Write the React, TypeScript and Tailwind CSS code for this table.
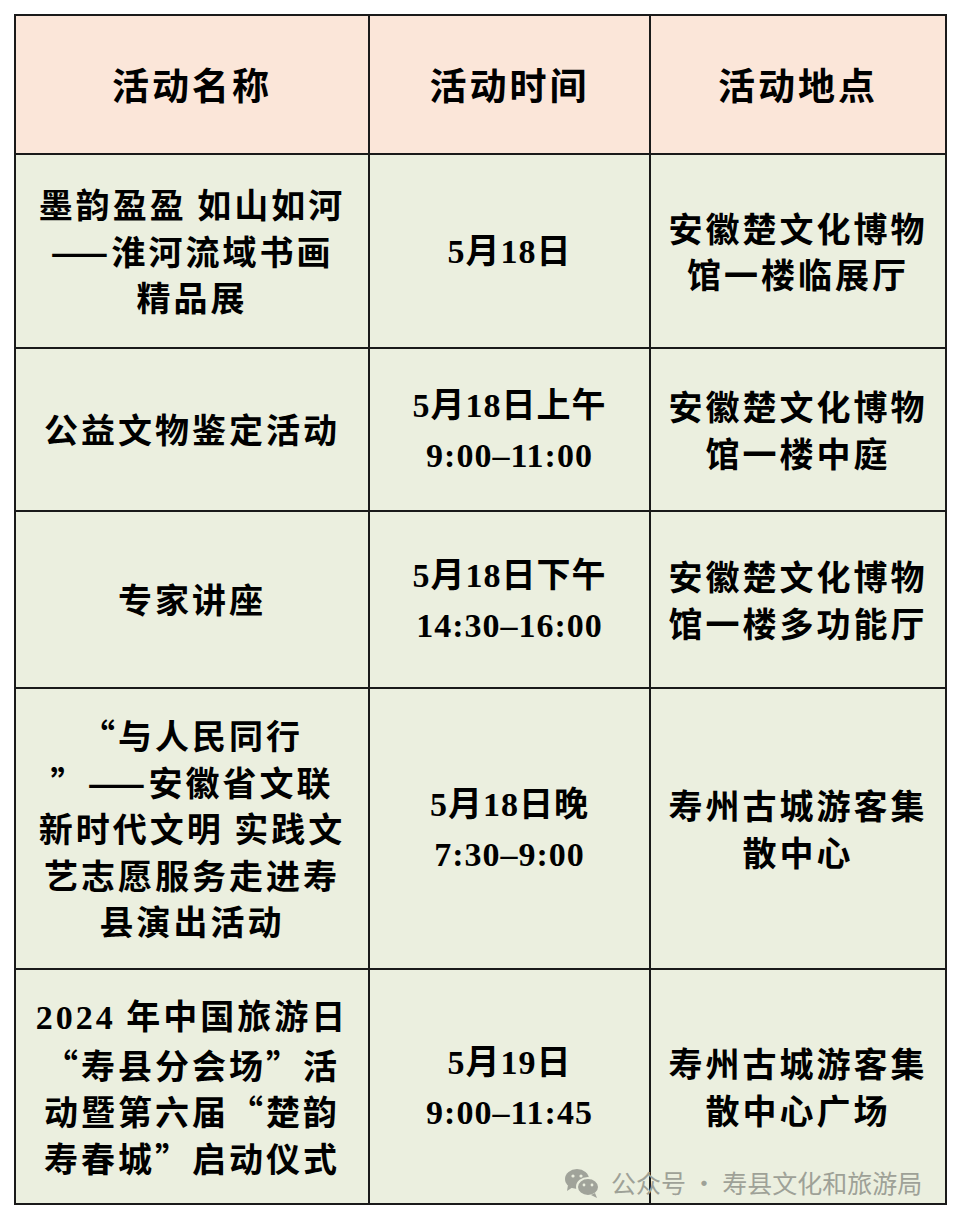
import React from 'react'

const cjk = '[font-family:"Noto_Sans_CJK_SC",sans-serif]'

// digits in the body are set in a Times-like serif
const Num = ({ children }: { children: React.ReactNode }) => (
  <span className='[font-family:"Liberation_Serif",serif]'>{children}</span>
)

const Lines = ({ lines }: { lines: React.ReactNode[] }) => (
  <>
    {lines.map((l, i) => (
      <div key={i} className="whitespace-nowrap">{l}</div>
    ))}
  </>
)

const rows: { h: string; name: React.ReactNode[]; time: React.ReactNode[]; place: React.ReactNode[] }[] = [
  {
    h: 'h-[194px]',
    name: ['墨韵盈盈 如山如河', '——淮河流域书画', '精品展'],
    time: [<><Num>5</Num>月<Num>18</Num>日</>],
    place: ['安徽楚文化博物', '馆一楼临展厅'],
  },
  {
    h: 'h-[163px]',
    name: ['公益文物鉴定活动'],
    time: [<><Num>5</Num>月<Num>18</Num>日上午</>, <Num>9:00–11:00</Num>],
    place: ['安徽楚文化博物', '馆一楼中庭'],
  },
  {
    h: 'h-[177px]',
    name: ['专家讲座'],
    time: [<><Num>5</Num>月<Num>18</Num>日下午</>, <Num>14:30–16:00</Num>],
    place: ['安徽楚文化博物', '馆一楼多功能厅'],
  },
  {
    h: 'h-[281px]',
    name: ['“与人民同行', '”——安徽省文联', '新时代文明 实践文', '艺志愿服务走进寿', '县演出活动'],
    time: [<><Num>5</Num>月<Num>18</Num>日晚</>, <Num>7:30–9:00</Num>],
    place: ['寿州古城游客集', '散中心'],
  },
  {
    h: 'h-[235px]',
    name: [<><Num>2024</Num> 年中国旅游日</>, '“寿县分会场”活', '动暨第六届“楚韵', '寿春城”启动仪式'],
    time: [<><Num>5</Num>月<Num>19</Num>日</>, <Num>9:00–11:45</Num>],
    place: ['寿州古城游客集', '散中心广场'],
  },
]

const WeChatIcon = () => (
  <svg width="36" height="30" viewBox="0 0 36 30" fill="#a0a39a">
    <ellipse cx="13" cy="11" rx="12" ry="10" />
    <path d="M4 17 L3 23 L9 19 Z" />
    <ellipse cx="24" cy="19" rx="11" ry="9" stroke="#ebefdf" strokeWidth="2" />
    <path d="M31 25 L33 30 L27 27 Z" />
    <circle cx="9" cy="8" r="1.6" fill="#ebefdf" />
    <circle cx="17" cy="8" r="1.6" fill="#ebefdf" />
    <circle cx="20" cy="17" r="1.4" fill="#ebefdf" />
    <circle cx="28" cy="17" r="1.4" fill="#ebefdf" />
  </svg>
)

export default function App() {
  return (
    <main className="relative w-[960px] h-[1220px] bg-white">
      <div className="pt-[14px] pl-[14px]">
        <table className={`w-[931px] table-fixed border-collapse border-2 border-[#1a1a1a] text-black ${cjk}`}>
          <colgroup>
            <col className="w-[354px]" />
            <col className="w-[281px]" />
            <col className="w-[296px]" />
          </colgroup>
          <thead>
            <tr className="h-[139px] bg-[#fbe6d9]">
              {['活动名称', '活动时间', '活动地点'].map((t) => (
                <th key={t} className="border-2 border-[#1a1a1a] text-center align-middle text-[37px] font-bold tracking-[3px]">
                  {t}
                </th>
              ))}
            </tr>
          </thead>
          <tbody>
            {rows.map((r, i) => (
              <tr key={i} className={`${r.h} bg-[#ebefdf]`}>
                <td className="border-2 border-[#1a1a1a] text-center align-middle text-[34px] font-bold leading-[46.5px] tracking-[3px]">
                  <Lines lines={r.name} />
                </td>
                <td className="border-2 border-[#1a1a1a] text-center align-middle text-[34px] font-bold leading-[46.5px] tracking-[1px]">
                  <Lines lines={r.time} />
                </td>
                <td className="border-2 border-[#1a1a1a] text-center align-middle text-[34px] font-bold leading-[46.5px] tracking-[3px]">
                  <Lines lines={r.place} />
                </td>
              </tr>
            ))}
          </tbody>
        </table>
      </div>

      {/* watermark */}
      <div className={`absolute left-[564px] top-[1164px] flex items-center gap-[11px] text-[#9ea197] text-[25px] ${cjk}`}>
        <WeChatIcon />
        <span className="whitespace-nowrap">公众号 · 寿县文化和旅游局</span>
      </div>
    </main>
  )
}
